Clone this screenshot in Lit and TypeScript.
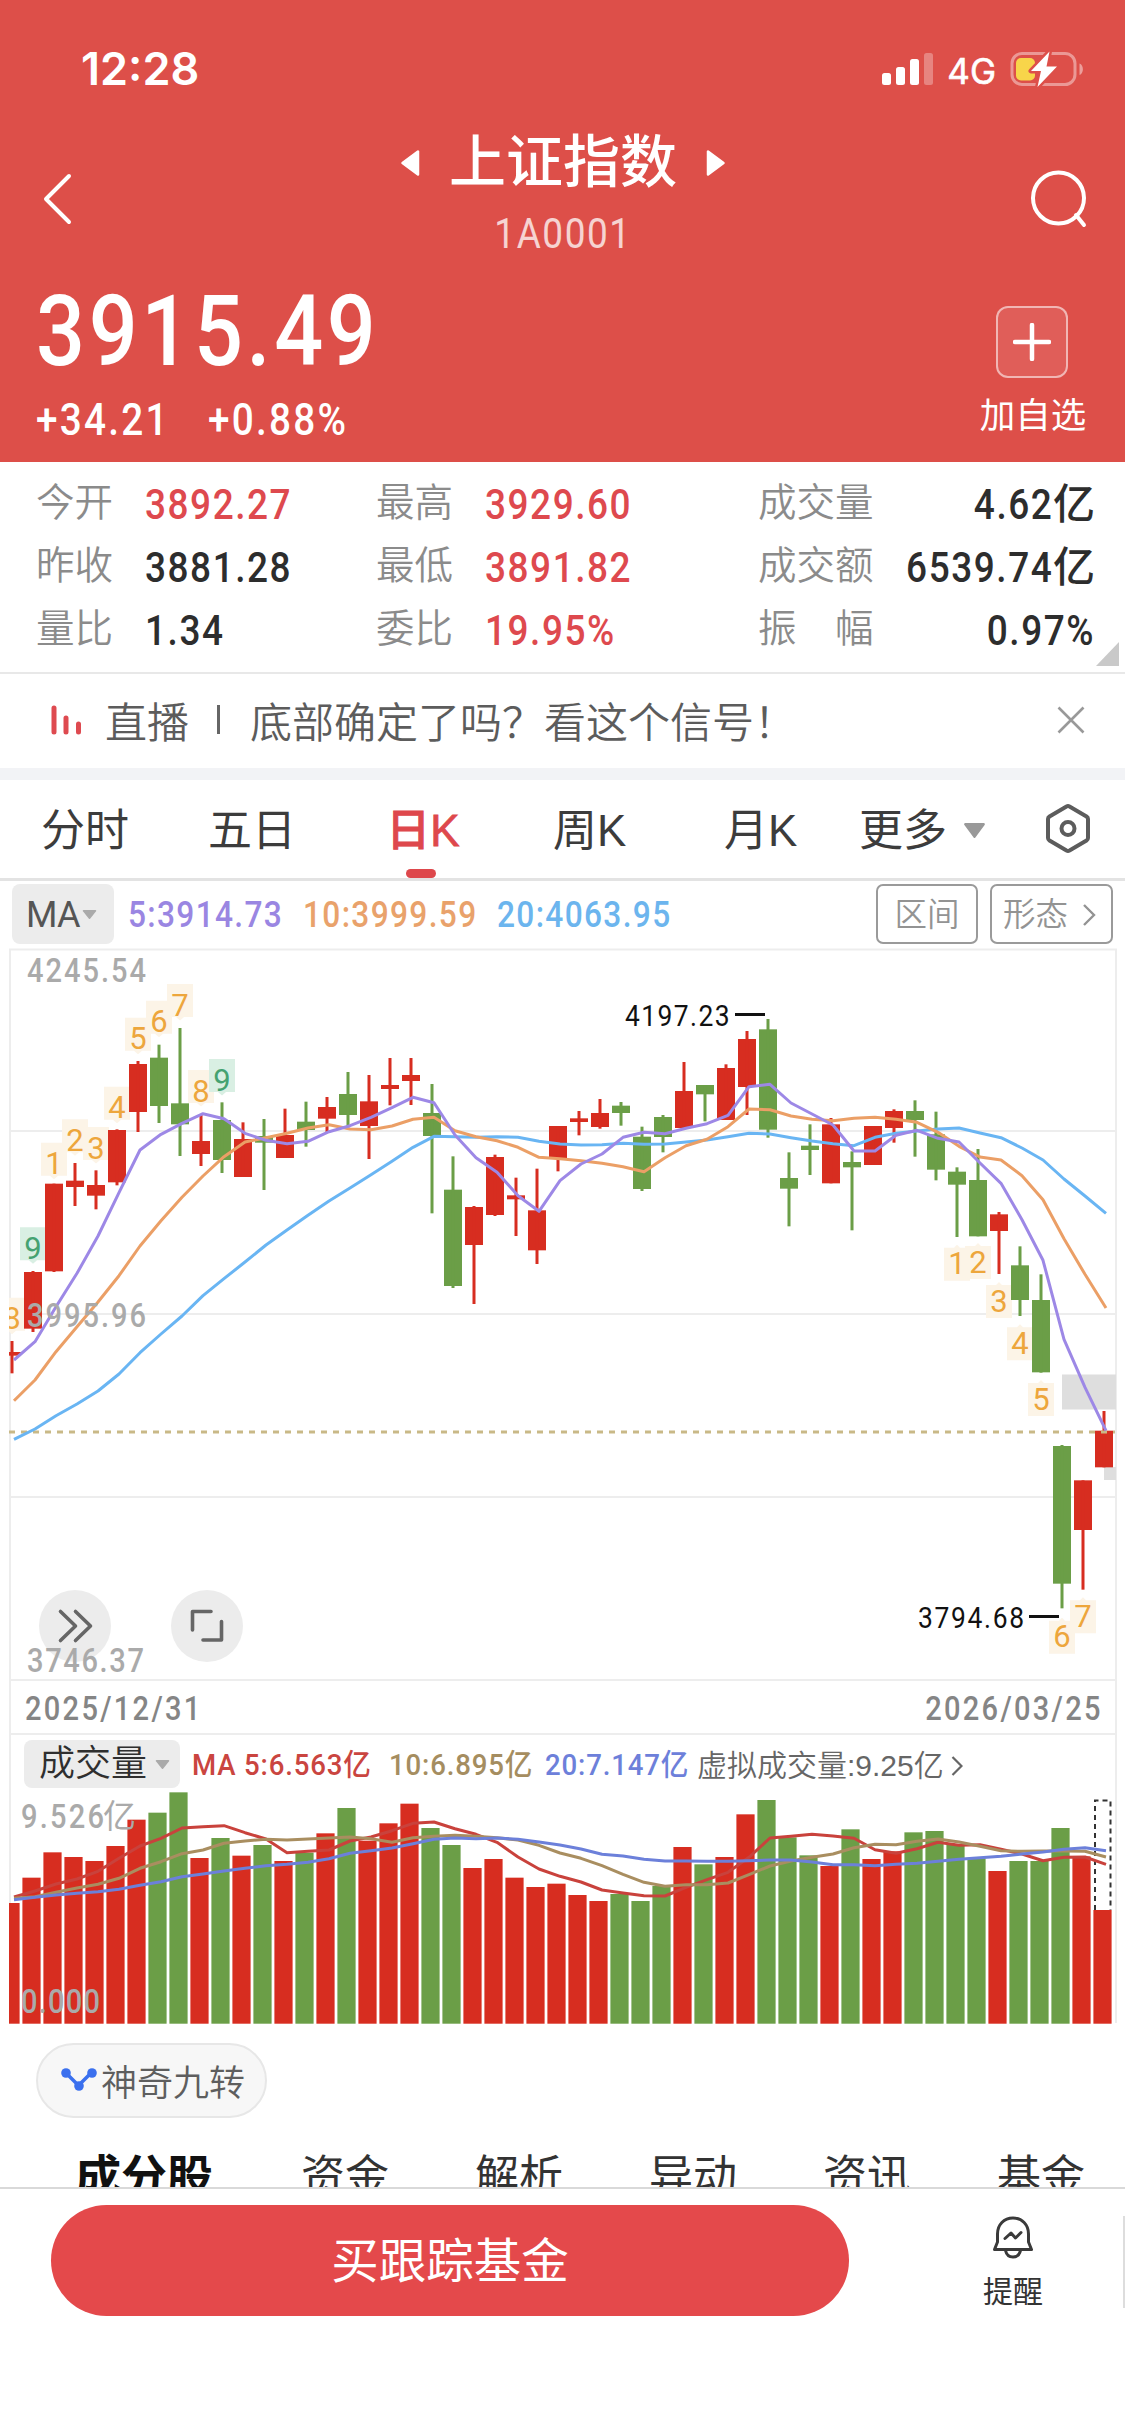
import { LitElement, html, svg, css } from "lit";
import { customElement } from "lit/decorators.js";
import { classMap } from "lit/directives/class-map.js";

const STEP = 21;
const FIRST = 12;
const NARROW = 0.88;

type Candle = ["r" | "g", number, number, number, number];

// Direction, body top, body bottom, wick top, wick bottom, in thirds of a pixel below y = 940.
const CANDLES: Candle[] = [
  ["r", 1236, 1247, 1203, 1300], ["r", 996, 1166, 993, 1176], ["r", 731, 994, 731, 996],
  ["r", 722, 741, 669, 798], ["r", 735, 767, 691, 808], ["r", 570, 727, 568, 736],
  ["r", 372, 516, 363, 576], ["g", 353, 498, 314, 549], ["g", 490, 553, 264, 648],
  ["r", 603, 642, 522, 678], ["g", 540, 660, 487, 699], ["r", 597, 711, 547, 711],
  ["g", 588, 608, 537, 750], ["r", 585, 654, 506, 654], ["g", 545, 570, 485, 620],
  ["r", 501, 536, 471, 576], ["g", 462, 525, 396, 560], ["r", 484, 558, 405, 657],
  ["r", 435, 447, 354, 496], ["r", 405, 423, 354, 495], ["g", 519, 588, 432, 820],
  ["g", 749, 1038, 649, 1044], ["r", 801, 915, 798, 1092], ["r", 651, 825, 644, 828],
  ["r", 766, 778, 713, 888], ["r", 811, 931, 686, 972], ["r", 558, 655, 558, 694],
  ["r", 535, 546, 513, 586], ["r", 519, 561, 477, 566], ["g", 497, 519, 486, 557],
  ["g", 590, 747, 560, 753], ["g", 531, 591, 525, 637], ["r", 453, 564, 366, 564],
  ["g", 435, 463, 435, 544], ["r", 384, 540, 373, 540], ["r", 297, 441, 273, 525],
  ["g", 268, 569, 237, 593], ["g", 714, 746, 637, 859], ["g", 617, 630, 553, 705],
  ["r", 553, 730, 534, 730], ["g", 666, 682, 634, 871], ["r", 558, 675, 558, 675],
  ["r", 513, 564, 508, 608], ["g", 513, 540, 481, 650], ["g", 583, 689, 515, 721],
  ["g", 695, 734, 682, 891], ["g", 720, 889, 627, 889], ["r", 823, 873, 816, 1002],
  ["g", 976, 1080, 919, 1128], ["g", 1080, 1297, 1003, 1298], ["g", 1518, 1931, 1515, 2005],
  ["r", 1621, 1770, 1621, 1949], ["r", 1472, 1582, 1413, 1582],
];

const PRICE_MA: [string, number[]][] = [
  ["ma20", [1498, 1467, 1427, 1392, 1353, 1302, 1238, 1182, 1128, 1067, 1016, 966, 915, 870, 826, 783, 744, 704, 664, 622, 589, 590, 592, 590, 592, 604, 612, 615, 614, 610, 613, 612, 606, 600, 590, 580, 582, 593, 603, 611, 617, 592, 580, 573, 567, 564, 579, 593, 624, 660, 717, 768, 820]],
  ["ma10", [1382, 1320, 1235, 1160, 1086, 1007, 918, 842, 772, 708, 650, 606, 593, 580, 564, 554, 567, 569, 558, 538, 532, 572, 590, 602, 622, 652, 656, 662, 670, 680, 695, 653, 617, 598, 560, 507, 509, 528, 538, 542, 535, 532, 538, 547, 577, 619, 651, 660, 707, 779, 896, 1003, 1104]],
  ["ma5", [1260, 1205, 1100, 1000, 888, 758, 630, 583, 550, 521, 536, 580, 601, 611, 604, 575, 557, 532, 503, 472, 488, 585, 653, 697, 767, 814, 722, 672, 642, 592, 577, 581, 565, 551, 526, 440, 433, 489, 522, 555, 633, 633, 586, 571, 595, 606, 669, 730, 839, 961, 1198, 1342, 1472]],
];

// Candle index, digit, top of the tag, and whether the tag hangs below its candle.
const TAGS: [number, string, number, boolean][] = [
  [0, "8", 1073, false], [1, "9", 862, false], [2, "1", 608, false], [3, "2", 538, false],
  [4, "3", 561, false], [5, "4", 440, false], [6, "5", 233, false], [7, "6", 182, false],
  [8, "7", 132, false], [9, "8", 390, false], [10, "9", 357, false],
  [45, "1", 923, true], [46, "2", 918, true], [47, "3", 1035, true], [48, "4", 1162, true],
  [49, "5", 1329, true], [50, "6", 2042, true], [51, "7", 1981, true],
];

// Bar tops, in thirds of a pixel below y = 1720.
const VOLUMES = [549, 473, 397, 411, 423, 378, 299, 278, 217, 414, 354, 407, 375, 423, 398, 340, 264, 362, 310, 251, 324, 375, 444, 417, 473, 501, 491, 525, 543, 522, 543, 498, 381, 433, 411, 283, 240, 352, 406, 438, 328, 417, 394, 337, 333, 375, 415, 453, 423, 423, 324, 409, 570];

const VOLUME_MA: [string, number[]][] = [
  ["v5", [531, 513, 492, 477, 454, 415, 378, 355, 324, 320, 317, 338, 357, 398, 394, 390, 363, 351, 332, 310, 306, 326, 343, 367, 411, 447, 469, 486, 510, 519, 527, 528, 502, 479, 457, 412, 354, 349, 343, 348, 355, 389, 400, 386, 367, 376, 374, 388, 402, 422, 412, 411, 433]],
  ["v10", [535, 530, 517, 504, 493, 475, 445, 425, 401, 390, 370, 363, 358, 360, 357, 354, 351, 356, 367, 353, 349, 346, 349, 353, 360, 376, 399, 415, 437, 463, 487, 499, 494, 494, 489, 464, 438, 423, 412, 402, 383, 373, 374, 364, 357, 366, 379, 392, 394, 393, 393, 394, 411]],
  ["v20", [539, 532, 525, 520, 515, 508, 496, 485, 470, 462, 453, 445, 437, 433, 427, 416, 400, 392, 384, 371, 358, 354, 356, 354, 358, 366, 375, 387, 403, 408, 418, 423, 423, 424, 424, 422, 420, 420, 426, 434, 434, 437, 433, 430, 424, 418, 413, 409, 402, 396, 388, 383, 392]],
];

const points = (values: number[], base: number) =>
  values.map((v, i) => `${FIRST + 2 + STEP * i},${(base + v / 3).toFixed(1)}`).join(" ");

const label = (name: string, x: number, y: number, width: number, text: string) =>
  svg`<text class=${name} transform="translate(${x} ${y}) scale(${NARROW} 1)" textLength=${width / NARROW}>${text}</text>`;

@customElement("price-chart")
class PriceChart extends LitElement {
  static styles = css`
    :host { display: block; height: 733px; }
    svg { display: block; }
    text { font-family: Roboto, "Noto Sans CJK SC", sans-serif; }
    .grid { stroke: #ededed; stroke-width: 2; fill: none; }
    .now { stroke: #c9b987; stroke-width: 3; stroke-dasharray: 6 6; }
    .r { fill: #d72d20; }
    .g { fill: #6b9e47; }
    .line { fill: none; stroke-width: 3; stroke-linejoin: round; }
    .ma5 { stroke: #9d88e6; }
    .ma10 { stroke: #eb9f66; }
    .ma20 { stroke: #69b5f3; }
    .tag { fill: #fcf4e7; }
    .tag.nine { fill: #d9efe3; }
    .digit { fill: #eda63c; font-size: 31px; text-anchor: middle; }
    .digit.nine { fill: #45a271; }
    .scale { fill: #aaa; font-size: 33px; font-weight: 500; }
    .mark { fill: #111; font-size: 30px; }
    .pointer { stroke: #111; stroke-width: 3; }
    .gap { fill: #dedede; }
    .round { fill: #ececec; }
    .glyph { fill: none; stroke: #666; stroke-width: 3.6; stroke-linecap: round; stroke-linejoin: round; }
  `;

  render() {
    const y = (v: number) => 940 + v / 3;
    return html`
      <svg width="1125" height="733" viewBox="0 948 1125 733">
        <defs><clipPath id="plot"><rect x="9" y="948" width="1107" height="733" /></clipPath></defs>
        <path class="grid" d="M10 1681V949.5H1116V1681M10 1131H1116M10 1314H1116M10 1497H1116M10 1680H1116" />
        <rect class="gap" x="1062" y="1374.5" width="54" height="35" />
        <rect class="gap" x="1104" y="1467" width="12" height="13" />
        <g clip-path="url(#plot)">
          ${TAGS.map(([i, d, top, below]) => {
            const x = FIRST + STEP * i;
            const nine = d === "9";
            const t = y(top);
            return svg`
              <path class=${classMap({ tag: true, nine })}
                d=${below
                  ? `M${x - 13} ${t}H${x - 3}L${x} ${t - 3}L${x + 3} ${t}H${x + 13}V${t + 33}H${x - 13}Z`
                  : `M${x - 13} ${t}H${x + 13}V${t + 33}H${x + 4}L${x} ${t + 36.5}L${x - 4} ${t + 33}H${x - 13}Z`} />
              <text class=${classMap({ digit: true, nine })} x=${x} y=${t + (below ? 26.5 : 31.5)}>${d}</text>`;
          })}
          ${CANDLES.map(([c, t, b, wt, wb], i) => {
            const x = FIRST + STEP * i;
            return svg`
              <rect class=${c} x=${x - 9} y=${y(t)} width="18" height=${(b - t) / 3} />
              <rect class=${c} x=${x - 1.5} y=${y(wt)} width="3" height=${(wb - wt) / 3} />`;
          })}
        </g>
        <path class="now" d="M9 1432H1115" />
        ${PRICE_MA.map(([name, v]) => svg`<polyline class="line ${name}" points=${points(v, 940)} />`)}
        <circle class="round" cx="75" cy="1626" r="36" />
        <circle class="round" cx="207" cy="1626" r="36" />
        <path class="glyph" d="M60.5 1611.5L75.5 1626L60.5 1640.5M75.5 1611.5L90.5 1626L75.5 1640.5" />
        <path class="glyph" d="M211 1611.5H192.5V1630M221.5 1621.5V1640H203" />
        ${label("scale", 27, 982, 119, "4245.54")}
        ${label("scale", 27, 1327, 119, "3995.96")}
        ${label("scale", 27, 1672, 117, "3746.37")}
        ${label("mark", 625, 1026, 104.5, "4197.23")}
        <path class="pointer" d="M735 1014.5H765M1029 1616.5H1059" />
        ${label("mark", 918, 1627.5, 106, "3794.68")}
      </svg>
    `;
  }
}

@customElement("volume-chart")
class VolumeChart extends LitElement {
  static styles = css`
    :host { display: block; height: 234px; }
    svg { display: block; }
    .r { fill: #d72d20; }
    .g { fill: #6b9e47; }
    .frame { stroke: #ededed; stroke-width: 2; fill: none; }
    .line { fill: none; stroke-width: 3; stroke-linejoin: round; }
    .v5 { stroke: #c9423c; }
    .v10 { stroke: #a98e60; }
    .v20 { stroke: #6c80da; }
    .forecast { fill: none; stroke: #333; stroke-width: 2; stroke-dasharray: 5 4; }
    .scale { fill: #aaa; font-size: 33px; font-weight: 500; font-family: Roboto, "Noto Sans CJK SC", sans-serif; }
    .unit { font-weight: 400; }
  `;

  render() {
    return html`
      <svg width="1125" height="234" viewBox="0 1791 1125 234">
        <path class="frame" d="M10 1791V2023M1116 1791V2023" />
        <path class="forecast" d="M1095 1910V1800.5H1110.5V1910" />
        ${VOLUMES.map((v, i) => {
          const x = Math.max(9, 1.4 + STEP * i);
          const top = 1720 + v / 3;
          return svg`<rect class=${CANDLES[i][0]} x=${x} y=${top} width=${19.6 + STEP * i - x} height=${2023.7 - top} />`;
        })}
        ${VOLUME_MA.map(([name, v]) => svg`<polyline class="line ${name}" points=${points(v, 1720)} />`)}
        ${label("scale", 21, 1827.5, 83, "9.526")}
        <text class="scale unit" x="103" y="1827.5">亿</text>
        ${label("scale", 21, 2012.5, 79, "0.000")}
      </svg>
    `;
  }
}

@customElement("app-root")
class AppRoot extends LitElement {
  static styles = css`
    :host {
      display: block;
      width: 1125px;
      height: 2436px;
      overflow: hidden;
      background: #fff;
      color: #333;
      font-family: Roboto, "Noto Sans CJK SC", sans-serif;
    }
    * { box-sizing: border-box; }
    svg { display: block; flex: none; }
    span, div { white-space: nowrap; }
    .num { display: inline-block; transform: scaleX(0.88); transform-origin: left; letter-spacing: 0.042em; font-weight: 500; }

    .top { height: 462px; background: #dd4f49; color: #fff; }
    .status { height: 130px; padding: 8px 41px 0 81px; display: flex; align-items: center; justify-content: space-between; }
    .clock { font: 600 45px/50px Inter, sans-serif; }
    .signals { display: flex; align-items: center; }
    .network { font: 400 35px/50px Inter, sans-serif; margin: 3px 13px 0 13px; -webkit-text-stroke: 0.6px #fff; }
    .nav { height: 138px; padding: 0 36px 0 38px; display: flex; align-items: center; justify-content: space-between; }
    .heading { align-self: flex-start; display: flex; flex-direction: column; align-items: center; margin-left: -1px; padding-top: 2px; }
    .name { display: flex; align-items: center; gap: 29px; height: 62px; }
    .name-text { font-size: 57px; line-height: 62px; font-weight: 500; }
    .num.code { font-size: 42px; line-height: 46px; margin-top: 17px; font-weight: 400; opacity: 0.75; transform-origin: center; }
    .quote { height: 194px; padding: 0 39px 0 36px; display: flex; justify-content: space-between; }
    .num.price { font-size: 98px; line-height: 100px; margin-top: 14px; }
    .change { display: grid; grid-template-columns: 172px 172px; font-size: 44px; line-height: 50px; margin-top: 13px; }
    .change .num { letter-spacing: 0.058em; }
    .add { display: flex; flex-direction: column; align-items: center; padding-top: 38px; width: 106px; }
    .add-box { width: 72px; height: 72px; border-radius: 12px; border: 2px solid rgba(255,255,255,.55); background: rgba(255,255,255,.09); display: grid; place-items: center; margin-left: -2px; }
    .add-text { font-size: 35.5px; line-height: 40px; margin-top: 18px; }

    .stats { height: 210px; padding: 9px 0 0 36px; display: grid; grid-template-columns: 109px 231px 109px 273px 118px 219px; grid-auto-rows: 63px; align-items: center; position: relative; }
    .label { font-size: 38.5px; color: #8b8b8b; font-weight: 350; line-height: 60px; }
    .value { font-size: 42px; font-weight: 500; color: #2d2d2d; line-height: 60px; margin-top: 5px; }
    .value.end { text-align: right; }
    .value.end .num { transform-origin: right; }
    .value.up { color: #de494e; }
    .corner { position: absolute; right: 6px; bottom: 6px; }

    .live { height: 96px; border-top: 2px solid #e8e8e8; padding: 0 40px 3px 51px; display: flex; align-items: center; font-size: 42px; color: #5c5c5c; font-weight: 350; }
    .live-tag { margin-left: 23px; width: 112px; }
    .live-bar { width: 3px; height: 29px; background: #666; margin-right: 30px; }
    .live-text { flex: 1; }
    .band { height: 12px; background: #f2f3f6; }

    .periods { height: 101px; border-bottom: 3px solid #e3e3e3; padding-left: 41px; display: grid; grid-template-columns: 167px 178px 167px 171px 135px 186px 60px; align-items: center; font-size: 44px; color: #3c3c3c; }
    .period { height: 98px; line-height: 98px; padding-top: 3px; font-family: "Liberation Sans", "Noto Sans CJK SC", sans-serif; display: flex; align-items: center; gap: 16px; }
    .period.active { color: #de484c; font-weight: 500; width: 74px; flex-direction: column; gap: 0; -webkit-text-stroke: 0.8px #de484c; }
    .period-text { height: 86px; line-height: 95px; }
    .underline { width: 30px; height: 9px; border-radius: 5px; background: #de484c; margin-left: -4px; }

    .legend { height: 67px; padding: 3px 12px 0 12px; display: flex; align-items: flex-start; line-height: 60px; }
    .pill { height: 60px; border-radius: 8px; background: #ececec; display: flex; align-items: center; }
    .ma-pill { width: 102px; padding: 1px 0 0 14px; gap: 2px; font-size: 36px; color: #555; letter-spacing: -0.8px; }
    .averages { flex: 1; padding: 1px 0 0 14px; display: grid; grid-template-columns: 175px 194px 1fr; font-size: 36px; }
    .c5 { color: #9a86e2; }
    .c10 { color: #e9a26b; }
    .c20 { color: #6cb5ee; }
    .chip { height: 60px; border: 2px solid #9a9a9a; border-radius: 7px; color: #939393; font-size: 32.5px; font-weight: 350; display: flex; align-items: center; justify-content: center; padding-top: 1px; }
    .range { width: 102px; margin-right: 12px; }
    .shape { width: 123px; gap: 14px; padding-right: 4px; }

    .dates { height: 52px; margin: 0 8px 0 9px; border: solid #ededed; border-width: 0 2px; padding: 0 12px 0 14px; display: flex; justify-content: space-between; font-size: 33px; line-height: 56px; color: #858585; }
    .dates .num { letter-spacing: 2.6px; }
    .dates .num + .num { transform-origin: right; }
    .vol-head { height: 58px; margin: 0 8px 0 9px; border: solid #ededed; border-width: 2px 2px 0; padding: 5px 0 0 13px; display: flex; font-size: 30px; line-height: 50px; }
    .vol-pill { width: 156px; height: 48px; padding-left: 15px; gap: 8px; font-size: 36px; color: #2f2f2f; font-weight: 350; margin-right: 12px; }
    .vol-ma { width: 197px; color: #ca4540; }
    .vol-10 { width: 156px; color: #a58d60; }
    .vol-20 { width: 152px; color: #6d80da; }
    .vol-head .num { transform: scaleX(0.92); letter-spacing: 0.9px; flex: none; }
    .virtual { color: #666; font-weight: 350; font-family: "Liberation Sans", "Noto Sans CJK SC", sans-serif; display: flex; align-items: center; gap: 7px; }

    .tools { height: 116px; padding: 18px 0 0 36px; }
    .tool { width: 231px; height: 75px; border: 2px solid #e7e7e7; border-radius: 38px; background: #f7f7f7; display: flex; align-items: center; padding: 0 0 2px 22px; gap: 3px; font-size: 36px; color: #5e5e5e; font-weight: 350; }
    .sections { height: 46px; overflow: hidden; padding: 4px 0 0 75px; display: grid; grid-template-columns: 226px 174px 174px 174px 174px 110px; font-size: 44px; line-height: 64px; color: #333; }
    .section.current { font-weight: 700; font-size: 46px; color: #111; }

    .bottom { height: 249px; border-top: 2px solid #d9d9d9; padding: 16px 0 0 51px; display: flex; align-items: flex-start; }
    .buy { width: 798px; height: 111px; border-radius: 56px; background: #e4494b; color: #fff; font-size: 47.5px; line-height: 115px; text-align: center; }
    .remind { width: 128px; margin: 0 46px 0 100px; padding-top: 11px; display: flex; flex-direction: column; align-items: center; font-size: 30px; line-height: 36px; gap: 14px; }
    .rule { width: 2px; height: 92px; margin-top: 11px; background: #ddd; }
  `;

  private stats: [string, string, string, boolean][] = [
    ["今开", "3892.27", "", true], ["最高", "3929.60", "", true], ["成交量", "4.62", "亿", false],
    ["昨收", "3881.28", "", false], ["最低", "3891.82", "", true], ["成交额", "6539.74", "亿", false],
    ["量比", "1.34", "", false], ["委比", "19.95%", "", true], ["振　幅", "0.97%", "", false],
  ];

  private sections = ["成分股", "资金", "解析", "异动", "资讯", "基金"];

  private down(w: number, h: number, fill: string) {
    return html`<svg width=${w} height=${h} viewBox="0 0 20 12" preserveAspectRatio="none">
      <path d="M2 1H18L10 11Z" fill=${fill} stroke=${fill} stroke-width="2" stroke-linejoin="round" />
    </svg>`;
  }

  render() {
    return html`
      <div class="top">
        <div class="status">
          <span class="clock">12:28</span>
          <div class="signals">
            <svg width="53" height="34" viewBox="0 0 53 34" fill="#fff">
              <rect x="1" y="21" width="9" height="12" rx="2.5" />
              <rect x="15" y="15" width="9" height="18" rx="2.5" />
              <rect x="29" y="7" width="9" height="26" rx="2.5" />
              <rect x="43" y="1" width="9" height="32" rx="2.5" opacity=".3" />
            </svg>
            <span class="network">4G</span>
            <svg width="75" height="38" viewBox="0 0 75 38">
              <rect x="3" y="3.5" width="63" height="31" rx="10" fill="none" stroke="#fff" stroke-opacity=".42" stroke-width="3" />
              <path d="M70.5 13.5C75 15 75 23.5 70.5 25Z" fill="#fff" opacity=".45" />
              <rect x="7" y="8" width="19" height="22.5" rx="5" fill="#f8d54a" />
              <path d="M40.5 1.5L22 21H32L28.5 37L48 16.5H37.5Z" fill="#fff" stroke="#dd4f49" stroke-width="5" paint-order="stroke" stroke-linejoin="round" />
            </svg>
          </div>
        </div>
        <div class="nav">
          <svg width="60" height="54" viewBox="0 0 60 54"><path d="M31 4L8 27L31 50" fill="none" stroke="#fff" stroke-width="4" stroke-linecap="round" stroke-linejoin="round" /></svg>
          <div class="heading">
            <div class="name">
              <svg width="20" height="28" viewBox="0 0 20 28"><path d="M18 2.5V25.5L2.5 14Z" fill="#fff" stroke="#fff" stroke-width="2.5" stroke-linejoin="round" /></svg>
              <span class="name-text">上证指数</span>
              <svg width="20" height="28" viewBox="0 0 20 28"><path d="M2 2.5V25.5L17.5 14Z" fill="#fff" stroke="#fff" stroke-width="2.5" stroke-linejoin="round" /></svg>
            </div>
            <span class="num code">1A0001</span>
          </div>
          <svg width="60" height="60" viewBox="0 0 60 60" fill="none" stroke="#fff" stroke-width="4" stroke-linecap="round">
            <circle cx="29.5" cy="29" r="25.5" /><path d="M47 46L55 56" />
          </svg>
        </div>
        <div class="quote">
          <div>
            <div class="num price">3915.49</div>
            <div class="change"><span class="num">+34.21</span><span class="num">+0.88%</span></div>
          </div>
          <div class="add">
            <div class="add-box">
              <svg width="38" height="38" viewBox="0 0 38 38"><path d="M19 2V36M2 19H36" stroke="#fff" stroke-width="4.5" stroke-linecap="round" /></svg>
            </div>
            <span class="add-text">加自选</span>
          </div>
        </div>
      </div>

      <div class="stats">
        ${this.stats.map(([name, value, unit, up], i) => html`
          <span class="label">${name}</span>
          <span class=${classMap({ value: true, up, end: i % 3 === 2 })}><span class="num">${value}</span>${unit}</span>
        `)}
        <svg class="corner" width="23" height="24"><path d="M23 0V24H0Z" fill="#c9c9c9" /></svg>
      </div>

      <div class="live">
        <svg width="31" height="30" viewBox="0 0 31 30" stroke="#de4a50" stroke-width="5" stroke-linecap="round"><path d="M3 3V27M15 13V27M27.5 19V27" /></svg>
        <span class="live-tag">直播</span>
        <i class="live-bar"></i>
        <span class="live-text">底部确定了吗？看这个信号！</span>
        <svg width="28" height="28" viewBox="0 0 28 28"><path d="M1.5 1.5L26.5 26.5M26.5 1.5L1.5 26.5" stroke="#999" stroke-width="2.6" /></svg>
      </div>
      <div class="band"></div>

      <div class="periods">
        <span class="period">分时</span>
        <span class="period">五日</span>
        <span class="period active"><span class="period-text">日K</span><i class="underline"></i></span>
        <span class="period">周K</span>
        <span class="period">月K</span>
        <span class="period">更多 ${this.down(23, 15, "#999")}</span>
        <svg width="46" height="50" viewBox="0 0 46 50" fill="none" stroke="#5c5c5c" stroke-width="4" stroke-linejoin="round">
          <path d="M21.5 2.5Q23 1.700 24.5 2.5L41.5 12.5Q43 13.5 43 15V34Q43 35.5 41.5 36.5L24.5 46.5Q23 47.300 21.5 46.5L4.5 36.5Q3 35.5 3 34V15Q3 13.5 4.5 12.5Z" />
          <circle cx="23" cy="24.5" r="6.5" />
        </svg>
      </div>

      <div class="legend">
        <div class="pill ma-pill">MA ${this.down(15, 9, "#aaa")}</div>
        <div class="averages">
          <span class="num c5">5:3914.73</span><span class="num c10">10:3999.59</span><span class="num c20">20:4063.95</span>
        </div>
        <div class="chip range">区间</div>
        <div class="chip shape">形态
          <svg width="14" height="24" viewBox="0 0 14 24"><path d="M2 2L12 12L2 22" fill="none" stroke="#939393" stroke-width="2.4" /></svg>
        </div>
      </div>

      <price-chart></price-chart>
      <div class="dates"><span class="num">2025/12/31</span><span class="num">2026/03/25</span></div>
      <div class="vol-head">
        <div class="pill vol-pill">成交量 ${this.down(15, 9, "#aaa")}</div>
        <span class="num vol-ma">MA 5:6.563亿</span>
        <span class="num vol-10">10:6.895亿</span>
        <span class="num vol-20">20:7.147亿</span>
        <span class="virtual">虚拟成交量:9.25亿
          <svg width="12" height="20" viewBox="0 0 12 20"><path d="M1.5 1L10.5 10L1.5 19" fill="none" stroke="#666" stroke-width="2.2" /></svg>
        </span>
      </div>
      <volume-chart></volume-chart>

      <div class="tools">
        <div class="tool">
          <svg width="38" height="26" viewBox="0 0 38 26" fill="#3b70ee">
            <path d="M6 6L18.5 18.5L31 6" fill="none" stroke="#3b70ee" stroke-width="3.5" />
            <circle cx="6" cy="6" r="4.8" /><circle cx="32" cy="6" r="4.8" /><circle cx="19" cy="19" r="4.8" />
          </svg>
          <span>神奇九转</span>
        </div>
      </div>
      <div class="sections">
        ${this.sections.map((s, i) => html`<span class=${classMap({ section: true, current: i === 0 })}>${s}</span>`)}
      </div>

      <div class="bottom">
        <div class="buy">买跟踪基金</div>
        <div class="remind">
          <svg width="42" height="44" viewBox="0 0 42 44" fill="none" stroke="#3a3a3a" stroke-width="3" stroke-linecap="round" stroke-linejoin="round">
            <path d="M5.5 26V18C5.5 8.5 12 2 21 2S36.5 8.5 36.5 18V26L39.5 33.5H2.5Z" />
            <path d="M13.5 34.5C14.5 39 17.5 41 21 41S27.5 39 28.5 34.5" />
            <path d="M13 22.5L19 17L23.5 22L29 16.5" />
          </svg>
          <span>提醒</span>
        </div>
        <i class="rule"></i>
      </div>
    `;
  }
}
